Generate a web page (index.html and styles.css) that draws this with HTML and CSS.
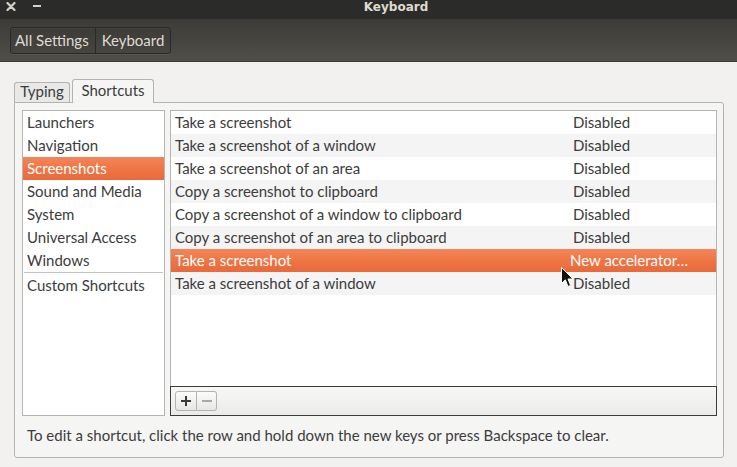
FILE: index.html
```html
<!DOCTYPE html>
<html>
<head>
<meta charset="utf-8">
<title>Keyboard</title>
<link rel="stylesheet" href="styles.css">
</head>
<body>
<div class="titlebar">
  <div class="wm">
    <svg class="close" width="10" height="9" viewBox="0 0 10 9"><path d="M1.5 1 L8.5 8 M8.5 1 L1.5 8" stroke="#d6d2ca" stroke-width="2.2" stroke-linecap="round"/></svg>
    <span class="min"></span>
  </div>
  <div class="title">Keyboard</div>
</div>
<div class="toolbar">
  <div class="crumbs">
    <span class="crumb">All Settings</span>
    <span class="crumb">Keyboard</span>
  </div>
</div>
<div class="content">
  <div class="tabs">
    <div class="tab typing">Typing</div>
    <div class="tab active">Shortcuts</div>
  </div>
  <div class="panel">
    <div class="lists">
      <ul class="cats">
        <li class="cat">Launchers</li>
        <li class="cat">Navigation</li>
        <li class="cat selected">Screenshots</li>
        <li class="cat">Sound and Media</li>
        <li class="cat">System</li>
        <li class="cat">Universal Access</li>
        <li class="cat">Windows</li>
        <li class="sep"></li>
        <li class="cat">Custom Shortcuts</li>
      </ul>
      <div class="shortcuts">
        <div class="rows">
          <div class="row"><span class="name">Take a screenshot</span><span class="accel">Disabled</span></div>
          <div class="row"><span class="name">Take a screenshot of a window</span><span class="accel">Disabled</span></div>
          <div class="row"><span class="name">Take a screenshot of an area</span><span class="accel">Disabled</span></div>
          <div class="row"><span class="name">Copy a screenshot to clipboard</span><span class="accel">Disabled</span></div>
          <div class="row"><span class="name">Copy a screenshot of a window to clipboard</span><span class="accel">Disabled</span></div>
          <div class="row"><span class="name">Copy a screenshot of an area to clipboard</span><span class="accel">Disabled</span></div>
          <div class="row selected"><span class="name">Take a screenshot</span><span class="accel editing">New accelerator…</span></div>
          <div class="row"><span class="name">Take a screenshot of a window</span><span class="accel">Disabled</span></div>
        </div>
        <div class="inline-toolbar">
          <span class="tbtn add"><svg width="10" height="10" viewBox="0 0 10 10"><path d="M5 0 V10 M0 5 H10" stroke="#3a3a3a" stroke-width="2"/></svg></span>
          <span class="tbtn remove"><svg width="10" height="10" viewBox="0 0 10 10"><path d="M0 5 H10" stroke="#a8a8a8" stroke-width="2"/></svg></span>
        </div>
      </div>
    </div>
    <p class="hint">To edit a shortcut, click the row and hold down the new keys or press Backspace to clear.</p>
  </div>
</div>
<svg class="cursor" width="13" height="21" viewBox="0 0 13 21"><path d="M0.5 0.5 L0.5 16.5 L4.3 12.8 L7 19.5 L9.6 18.4 L7 12 L12 12 Z" fill="#111" stroke="#fff" stroke-width="1" stroke-linejoin="round"/></svg>
</body>
</html>
```

FILE: styles.css
```css
* { box-sizing: border-box; }
html, body { margin: 0; padding: 0; }
body {
  width: 737px;
  height: 467px;
  overflow: hidden;
  position: relative;
  background: #f2f1f0;
  font-family: Lato, "Open Sans", sans-serif;
  font-size: 15px;
  color: #3c3c3c;
}

/* title bar */
.titlebar {
  height: 19px;
  background: #2b2b29;
  display: flex;
  align-items: flex-start;
  color: #dfdbd2;
}
.wm {
  display: flex;
  align-items: flex-start;
  padding: 2px 0 0 6px;
  width: 41px;
}
.wm .close { display: block; }
.wm .min {
  display: block;
  width: 8px;
  height: 2px;
  background: #d6d2ca;
  margin-left: 17px;
  margin-top: 3px;
}
.title {
  flex: 1;
  text-align: center;
  padding-left: 14px;
  font-family: "DejaVu Sans", sans-serif;
  font-weight: 700;
  font-size: 12px;
  line-height: 14px;
}

/* toolbar */
.toolbar {
  height: 43px;
  background: linear-gradient(#3c3b37, #504e49);
  border-bottom: 1px solid #3a3935;
  padding: 8px 0 0 10px;
}
.crumbs {
  display: inline-flex;
  height: 27px;
  border: 1px solid #2a2926;
  border-radius: 3px;
  box-shadow: inset 0 1px rgba(255,255,255,0.05), 0 1px rgba(255,255,255,0.07);
  background: rgba(0,0,0,0.06);
}
.crumb {
  color: #dfdbd2;
  line-height: 25px;
  padding: 0 6px 0 4px;
}
.crumb + .crumb {
  border-left: 1px solid #2a2926;
  padding: 0 6px 0 6px;
}

/* content */
.content {
  padding: 17px 0 0 14px;
}
.tabs {
  display: flex;
  align-items: flex-end;
  gap: 2px;
  height: 23px;
}
.tab {
  height: 20px;
  text-align: center;
  border: 1px solid #b3b3b1;
  border-bottom: none;
  border-radius: 3px 3px 0 0;
  background: #e8e8e6;
  line-height: 17px;
}
.tab.typing { width: 56px; }
.tab.active {
  width: 82px;
  height: 24px;
  margin-bottom: -1px;
  position: relative;
  z-index: 1;
  background: #f5f5f4;
  padding-top: 2px;
}
.panel {
  width: 710px;
  height: 356px;
  border: 1px solid #b3b3b1;
  border-radius: 0 3px 3px 3px;
  background: #f5f5f4;
  padding: 7px 6px 0 7px;
}
.lists {
  display: flex;
  gap: 5px;
  height: 306px;
}
.cats {
  width: 143px;
  margin: 0;
  padding: 0;
  list-style: none;
  background: #fff;
  border: 1px solid #b5b5b3;
}
.cat {
  height: 23px;
  line-height: 23px;
  padding-left: 4px;
  white-space: nowrap;
}
.selected {
  background: linear-gradient(#f3865a, #ef7544 50%, #e9693a);
  color: #fff;
}
.sep {
  height: 2px;
  margin: 0 1px;
  border-top: 1px solid #c4c4c2;
}
.shortcuts {
  flex: 1;
  display: flex;
  flex-direction: column;
}
.rows {
  flex: 1;
  background: #fff;
  border: 1px solid #b5b5b3;
  border-bottom: none;
}
.row {
  display: flex;
  height: 23px;
  line-height: 23px;
  white-space: nowrap;
}
.row:nth-child(even) { background: #f4f4f4; }
.row.selected {
  background: linear-gradient(#f3865a, #ef7544 50%, #e9693a);
  color: #fff;
}
.name {
  width: 402px;
  padding-left: 4px;
}
.accel.editing { margin-left: -3px; }

.inline-toolbar {
  height: 30px;
  border: 1px solid #3c3c3a;
  background: linear-gradient(#f7f7f6, #ebebea);
  display: flex;
  padding: 4px 0 0 4px;
}
.tbtn {
  display: flex;
  align-items: center;
  justify-content: center;
  height: 20px;
  border: 1px solid #b4b4b2;
  background: linear-gradient(#fcfcfc, #e6e6e5);
}
.tbtn.add {
  width: 22px;
  border-radius: 3px 0 0 3px;
}
.tbtn.remove {
  width: 20px;
  border-left: none;
  border-radius: 0 3px 3px 0;
}
.hint {
  margin: 11px 0 0 5px;
  line-height: 17px;
}

.cursor {
  position: absolute;
  left: 561px;
  top: 267px;
}
```
